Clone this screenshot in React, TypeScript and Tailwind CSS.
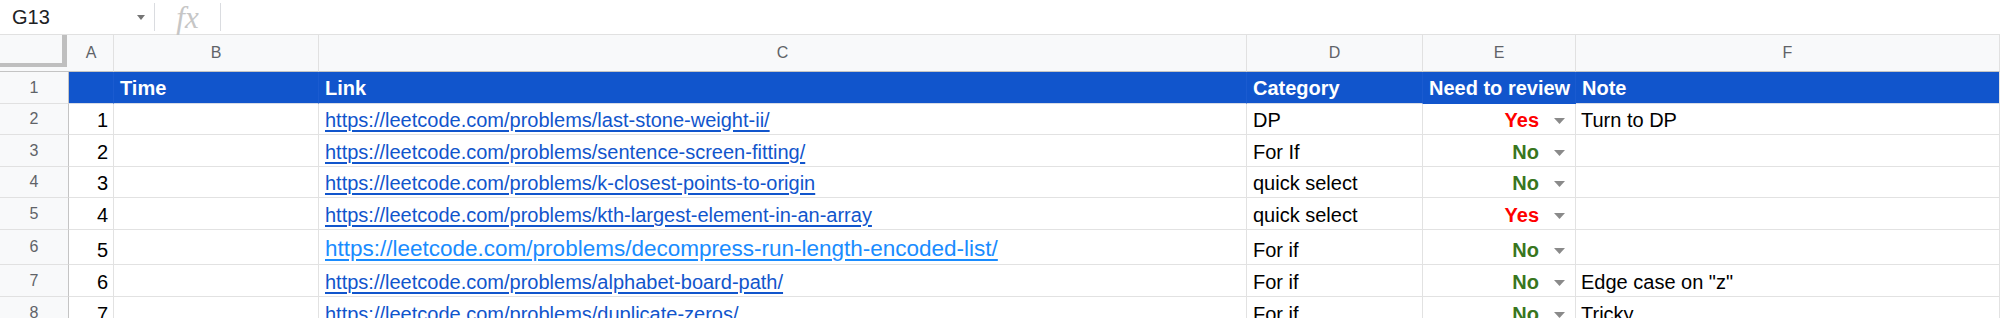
import React from "react";

const W = ["w-[69px]", "w-[45px]", "w-[205px]", "w-[928px]", "w-[176px]", "w-[153px]", "w-[424px]"];

type Row = {
  n: number;
  h: string;
  a: string;
  link: string;
  big?: boolean;
  cat: string;
  review: "Yes" | "No";
  note: string;
};

const rows: Row[] = [
  { n: 2, h: "h-[31px]", a: "1", link: "https://leetcode.com/problems/last-stone-weight-ii/", cat: "DP", review: "Yes", note: "Turn to DP" },
  { n: 3, h: "h-[32px]", a: "2", link: "https://leetcode.com/problems/sentence-screen-fitting/", cat: "For If", review: "No", note: "" },
  { n: 4, h: "h-[31px]", a: "3", link: "https://leetcode.com/problems/k-closest-points-to-origin", cat: "quick select", review: "No", note: "" },
  { n: 5, h: "h-[32px]", a: "4", link: "https://leetcode.com/problems/kth-largest-element-in-an-array", cat: "quick select", review: "Yes", note: "" },
  { n: 6, h: "h-[35px]", a: "5", link: "https://leetcode.com/problems/decompress-run-length-encoded-list/", big: true, cat: "For if", review: "No", note: "" },
  { n: 7, h: "h-[32px]", a: "6", link: "https://leetcode.com/problems/alphabet-board-path/", cat: "For if", review: "No", note: 'Edge case on "z"' },
  { n: 8, h: "h-[32px]", a: "7", link: "https://leetcode.com/problems/duplicate-zeros/", cat: "For if", review: "No", note: "Tricky" },
];

function Caret() {
  return (
    <svg width="11" height="6" viewBox="0 0 11 6" className="shrink-0">
      <path d="M0 0 L11 0 L5.5 6 Z" fill="#8a8a8a" />
    </svg>
  );
}

export default function App() {
  return (
    <div className="w-[2000px] h-[318px] overflow-hidden bg-white font-['Liberation_Sans',Arial,sans-serif] text-black">
      {/* formula bar */}
      <div className="flex h-[35px] items-center border-b border-[#e1e1e1] bg-white">
        <div className="flex w-[154px] items-center pl-[12px] pr-[9px]">
          <span className="flex-1 text-[20px] leading-none text-[#202124]">G13</span>
          <svg width="8" height="5" viewBox="0 0 8 5">
            <path d="M0 0 L8 0 L4 5 Z" fill="#757575" />
          </svg>
        </div>
        <div className="h-[28px] w-px bg-[#dadce0]" />
        <div className="flex w-[65px] items-center justify-center">
          <span className="font-['Liberation_Serif',serif] italic text-[31px] leading-none text-[#c6c6c6]">fx</span>
        </div>
        <div className="h-[28px] w-px bg-[#dadce0]" />
      </div>

      {/* column headers */}
      <div className="flex h-[37px]">
        <div className={`${W[0]} relative h-full bg-[#f8f9fa] border-b border-[#c4c4c4]`}>
          <div className="absolute left-[62px] top-0 h-[32px] w-[5px] bg-[#bfbfbf]" />
          <div className="absolute left-0 top-[28px] h-[4px] w-[67px] bg-[#bfbfbf]" />
        </div>
        {["A", "B", "C", "D", "E", "F"].map((c, i) => (
          <div
            key={c}
            className={`${W[i + 1]} flex h-full items-center justify-center bg-[#f8f9fa] border-r border-b border-r-[#e1e1e1] border-b-[#c4c4c4] text-[16px] text-[#5f6368]`}
          >
            {c}
          </div>
        ))}
      </div>

      {/* row 1 header row */}
      <div className="flex h-[32px]">
        <div className={`${W[0]} flex h-full items-center justify-center bg-[#f8f9fa] border-r border-b border-r-[#c4c4c4] border-b-[#e1e1e1] text-[16px] text-[#5f6368]`}>
          1
        </div>
        <div className={`${W[1]} h-full bg-[#1155cc] border-r border-b border-r-[#1a5bd0] border-b-[#d6dbe6]`} />
        <div className={`${W[2]} flex h-full items-end pb-[3px] pl-[6px] bg-[#1155cc] border-r border-b border-r-[#1a5bd0] border-b-[#d6dbe6] text-[20px] leading-[23px] font-bold text-white`}>Time</div>
        <div className={`${W[3]} flex h-full items-end pb-[3px] pl-[6px] bg-[#1155cc] border-r border-b border-r-[#1a5bd0] border-b-[#d6dbe6] text-[20px] leading-[23px] font-bold text-white`}>Link</div>
        <div className={`${W[4]} flex h-full items-end pb-[3px] pl-[6px] bg-[#1155cc] border-r border-b border-r-[#1a5bd0] border-b-[#d6dbe6] text-[20px] leading-[23px] font-bold text-white`}>Category</div>
        <div className={`${W[5]} flex h-full items-end pb-[3px] pl-[6px] bg-[#1155cc] border-r border-b border-r-[#1a5bd0] border-b-[#1155cc] text-[20px] leading-[23px] font-bold text-white whitespace-nowrap`}>Need to review</div>
        <div className={`${W[6]} flex h-full items-end pb-[3px] pl-[6px] bg-[#1155cc] border-r border-b border-r-[#e1e1e1] border-b-[#d6dbe6] text-[20px] leading-[23px] font-bold text-white`}>Note</div>
      </div>

      {rows.map((r) => (
        <div key={r.n} className={`flex ${r.h}`}>
          <div className={`${W[0]} flex h-full items-center justify-center bg-[#f8f9fa] border-r border-b border-r-[#c4c4c4] border-b-[#e1e1e1] text-[16px] text-[#5f6368]`}>
            {r.n}
          </div>
          <div className={`${W[1]} flex h-full items-end justify-end pb-[2px] pr-[5px] border-r border-b border-[#e2e2e2] text-[20px] leading-[23px]`}>{r.a}</div>
          <div className={`${W[2]} h-full border-r border-b border-[#e2e2e2]`} />
          <div className={`${W[3]} flex h-full items-end pb-[2px] pl-[6px] border-r border-b border-[#e2e2e2] whitespace-nowrap`}>
            {r.big ? (
              <span className="text-[22.5px] leading-[26px] text-[#1a8cff] underline underline-offset-[3px]">{r.link}</span>
            ) : (
              <span className="text-[20px] leading-[23px] text-[#1155cc] underline underline-offset-[3px]">{r.link}</span>
            )}
          </div>
          <div className={`${W[4]} flex h-full items-end pb-[2px] pl-[6px] border-r border-b border-[#e2e2e2] text-[20px] leading-[23px] whitespace-nowrap`}>{r.cat}</div>
          <div className={`${W[5]} flex h-full items-end justify-end pb-[2px] pr-[10px] border-r border-b border-[#e2e2e2] text-[20px] leading-[23px] font-bold whitespace-nowrap`}>
            <span className={r.review === "Yes" ? "text-[#ff0000]" : "text-[#38761d]"}>{r.review}</span>
            <span className="ml-[15px] mb-[8px] flex items-center">
              <Caret />
            </span>
          </div>
          <div className={`${W[6]} flex h-full items-end pb-[2px] pl-[5px] border-r border-b border-[#e2e2e2] text-[20px] leading-[23px] whitespace-nowrap`}>{r.note}</div>
        </div>
      ))}
    </div>
  );
}
